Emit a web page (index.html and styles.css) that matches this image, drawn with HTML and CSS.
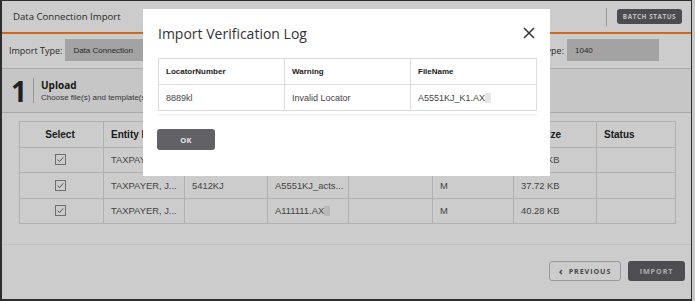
FILE: index.html
```html
<!DOCTYPE html>
<html lang="en">
<head>
<meta charset="utf-8">
<title>Data Connection Import</title>
<link rel="stylesheet" href="styles.css">
</head>
<body>
<div class="frame">
  <header class="topbar">
    <h1 class="topbar-title">Data Connection Import</h1>
    <div class="topbar-actions">
      <span class="vsep"></span>
      <button class="btn-batch">BATCH STATUS</button>
    </div>
  </header>

  <div class="typerow">
    <div class="field">
      <span class="field-label">Import Type:</span>
      <span class="field-box field-box-wide">Data Connection</span>
    </div>
    <div class="field">
      <span class="field-label">Return Type:</span>
      <span class="field-box field-box-narrow">1040</span>
    </div>
  </div>

  <section class="step">
    <span class="step-num">1</span>
    <span class="step-sep"></span>
    <div class="step-text">
      <div class="step-title">Upload</div>
      <div class="step-sub">Choose file(s) and template(s)</div>
    </div>
  </section>

  <div class="table-wrap">
    <table class="files">
      <thead>
        <tr>
          <th class="c-select">Select</th>
          <th>Entity Name</th>
          <th>Locator</th>
          <th>File Name</th>
          <th>Template</th>
          <th>Type</th>
          <th>File Size</th>
          <th>Status</th>
        </tr>
      </thead>
      <tbody>
        <tr>
          <td class="c-select"><svg class="chk" width="11" height="11" viewBox="0 0 11 11"><rect x="0.5" y="0.5" width="10" height="10" fill="#fff" stroke="#8a8a8a"/><path d="M2.6 5.6 L4.5 7.6 L8.3 3.3" fill="none" stroke="#6a6a6a" stroke-width="1"/></svg></td>
          <td>TAXPAYER, J...</td>
          <td>8889kl</td>
          <td>A5551KJ_K1.AX</td>
          <td></td>
          <td>M</td>
          <td>38.15 KB</td>
          <td></td>
        </tr>
        <tr>
          <td class="c-select"><svg class="chk" width="11" height="11" viewBox="0 0 11 11"><rect x="0.5" y="0.5" width="10" height="10" fill="#fff" stroke="#8a8a8a"/><path d="M2.6 5.6 L4.5 7.6 L8.3 3.3" fill="none" stroke="#6a6a6a" stroke-width="1"/></svg></td>
          <td>TAXPAYER, J...</td>
          <td>5412KJ</td>
          <td>A5551KJ_acts...</td>
          <td></td>
          <td>M</td>
          <td>37.72 KB</td>
          <td></td>
        </tr>
        <tr>
          <td class="c-select"><svg class="chk" width="11" height="11" viewBox="0 0 11 11"><rect x="0.5" y="0.5" width="10" height="10" fill="#fff" stroke="#8a8a8a"/><path d="M2.6 5.6 L4.5 7.6 L8.3 3.3" fill="none" stroke="#6a6a6a" stroke-width="1"/></svg></td>
          <td>TAXPAYER, J...</td>
          <td></td>
          <td>A111111.AX<span class="redact"></span></td>
          <td></td>
          <td>M</td>
          <td>40.28 KB</td>
          <td></td>
        </tr>
      </tbody>
    </table>
  </div>

  <footer class="footer">
    <button class="btn-prev"><span class="chev">‹</span>PREVIOUS</button>
    <button class="btn-import">IMPORT</button>
  </footer>

  <div class="overlay"></div>

  <div class="modal" role="dialog">
    <div class="modal-head">
      <h2 class="modal-title">Import Verification Log</h2>
      <svg class="modal-close" width="12" height="12" viewBox="0 0 12 12"><path d="M1 1 L11 11 M11 1 L1 11" stroke="#333" stroke-width="1.5" fill="none"/></svg>
    </div>
    <table class="log">
      <thead>
        <tr><th>LocatorNumber</th><th>Warning</th><th>FileName</th></tr>
      </thead>
      <tbody>
        <tr><td>8889kl</td><td>Invalid Locator</td><td>A5551KJ_K1.AX<span class="redact"></span></td></tr>
      </tbody>
    </table>
    <div class="modal-rule"></div>
    <button class="btn-ok">OK</button>
  </div>
</div>
</body>
</html>
```

FILE: styles.css
```css
* { box-sizing: border-box; }

html, body {
  margin: 0;
  padding: 0;
}

body {
  background: #c9c9c9;
  width: 695px;
  height: 301px;
  overflow: hidden;
}

.frame {
  position: relative;
  width: 692px;
  height: 301px;
  border-style: solid;
  border-color: #2e2e2e;
  border-width: 1px 1px 2px 2px;
  background: #ffffff;
  display: flex;
  flex-direction: column;
  font-family: "Liberation Sans", Arial, sans-serif;
  color: #333;
  overflow: hidden;
}

/* top bar */
.topbar {
  height: 33px;
  flex: none;
  border-bottom: 2px solid #ff8626;
  display: flex;
  align-items: center;
  justify-content: space-between;
  padding: 0 9px 0 11px;
}

.topbar-title {
  margin: 0;
  font-family: "Open Sans", sans-serif;
  font-weight: 400;
  font-size: 9.6px;
  color: #333;
}

.topbar-actions {
  display: flex;
  align-items: center;
  gap: 10px;
}

.vsep {
  width: 1px;
  height: 18px;
  background: #c4c4c4;
}

.btn-batch {
  width: 65px;
  height: 15px;
  border: none;
  border-radius: 3px;
  background: #5f5f64;
  color: #f0f0f0;
  font-family: "Open Sans", sans-serif;
  font-weight: 700;
  font-size: 6.4px;
  letter-spacing: 0.55px;
  padding: 0;
}

/* import type row */
.typerow {
  height: 34px;
  flex: none;
  display: flex;
  justify-content: space-between;
  align-items: flex-start;
  padding: 5px 32px 0 7px;
}

.field {
  display: flex;
  align-items: center;
  gap: 3px;
}

.field-label {
  font-family: "Open Sans", sans-serif;
  font-size: 9px;
  color: #333;
}

.field-box {
  height: 22px;
  display: flex;
  align-items: center;
  padding-left: 8px;
  background: #cccccc;
  font-size: 8px;
  color: #333;
}

.field-box-wide { width: 150px; }
.field-box-narrow { width: 92px; }

/* step section */
.step {
  height: 45px;
  flex: none;
  border-top: 1px solid #d4d4d4;
  border-bottom: 1px solid #d4d4d4;
  background: #f8f8f8;
  display: flex;
  align-items: center;
  padding-left: 9px;
}

.step-num {
  font-family: "Open Sans", sans-serif;
  font-weight: 700;
  font-size: 28px;
  line-height: 1;
  color: #2a2a2a;
  width: 17px;
}

.step-sep {
  width: 1px;
  height: 25px;
  background: #bdbdbd;
  margin: 0 7px 0 5px;
}

.step-title {
  font-family: "Open Sans", sans-serif;
  font-weight: 700;
  font-size: 10px;
  line-height: 13px;
  color: #222;
}

.step-sub {
  font-size: 8px;
  line-height: 11px;
  color: #444;
  white-space: nowrap;
}

/* files table */
.table-wrap {
  flex: none;
  padding: 8px 0 0 17px;
  height: 132px;
  border-bottom: 1px solid #f4f4f4;
}

.files {
  border-collapse: collapse;
  width: 656px;
  table-layout: fixed;
}

.files th,
.files td {
  border: 1px solid #dcdcdc;
  height: 25.5px;
  padding: 0 0 0 7px;
  text-align: left;
  white-space: nowrap;
  overflow: hidden;
}

.files th {
  font-weight: 700;
  font-size: 10px;
  color: #222;
}

.files td {
  font-size: 9.4px;
  color: #555;
}

.files th:nth-child(1) { width: 84px; }
.files th:nth-child(2) { width: 81px; }
.files th:nth-child(3) { width: 83px; }
.files th:nth-child(4) { width: 81px; }
.files th:nth-child(5) { width: 84px; }
.files th:nth-child(6) { width: 81px; }
.files th:nth-child(7) { width: 83px; }
.files th:nth-child(8) { width: 79px; }

.files .c-select {
  text-align: center;
  padding: 0 3px 0 0;
}

.chk { display: block; margin: 0 auto; }

.redact {
  display: inline-block;
  width: 6px;
  height: 10px;
  background: #e6e6e6;
  vertical-align: -2px;
}

/* footer */
.footer {
  flex: 1;
  display: flex;
  justify-content: flex-end;
  align-items: flex-start;
  gap: 7px;
  padding: 16px 6px 0 0;
}

.btn-prev {
  width: 72px;
  height: 20px;
  border: 1px solid #c0c0c0;
  border-radius: 3px;
  background: #ffffff;
  color: #5a5a5a;
  font-family: "Open Sans", sans-serif;
  font-weight: 700;
  font-size: 7.2px;
  letter-spacing: 0.9px;
  padding: 0;
  display: flex;
  align-items: center;
  justify-content: center;
  gap: 5px;
}

.chev {
  font-size: 11px;
  line-height: 1;
  margin-top: -2px;
}

.btn-import {
  width: 57px;
  height: 20px;
  border: none;
  border-radius: 3px;
  background: #626267;
  color: #d8d8d8;
  font-family: "Open Sans", sans-serif;
  font-weight: 700;
  font-size: 7.2px;
  letter-spacing: 0.9px;
  padding: 0;
}

/* overlay and modal */
.overlay {
  position: absolute;
  inset: 0;
  background: rgba(0, 0, 0, 0.2);
}

.modal {
  position: absolute;
  left: 141px;
  top: 8px;
  width: 407px;
  height: 167px;
  background: #ffffff;
  padding: 13px 15px 0 15px;
}

.modal-head {
  display: flex;
  justify-content: space-between;
  align-items: center;
  height: 22px;
}

.modal-title {
  margin: 0;
  font-family: "Open Sans", sans-serif;
  font-weight: 400;
  font-size: 14px;
  color: #333;
}

.modal-close { display: block; }

.log {
  margin-top: 14px;
  width: 379px;
  border-collapse: collapse;
  table-layout: fixed;
}

.log th,
.log td {
  border: 1px solid #dcdcdc;
  height: 26px;
  padding: 0 0 0 7px;
  text-align: left;
  white-space: nowrap;
}

.log th {
  font-weight: 700;
  font-size: 8px;
  color: #222;
}

.log td {
  font-size: 9px;
  color: #444;
}

.log th:nth-child(1) { width: 126px; }
.log th:nth-child(2) { width: 126px; }

.modal-rule {
  width: 379px;
  height: 2px;
  margin-top: 3px;
  background: #f3f3f3;
}

.btn-ok {
  display: block;
  margin: 13px 0 0 -1px;
  width: 58px;
  height: 21px;
  border: none;
  border-radius: 3px;
  background: #616166;
  color: #e6e6e6;
  font-family: "Open Sans", sans-serif;
  font-weight: 700;
  font-size: 7.5px;
  letter-spacing: 0.4px;
  padding: 0;
}
```
